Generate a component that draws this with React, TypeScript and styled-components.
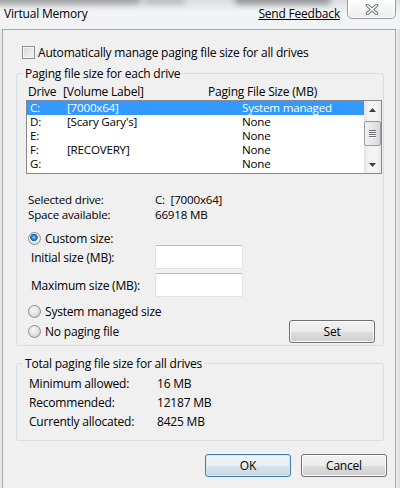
import React from 'react';
import styled, { createGlobalStyle } from 'styled-components';

const DRIVES = [
  { drive: 'C:', label: '[7000x64]', size: 'System managed' },
  { drive: 'D:', label: "[Scary Gary's]", size: 'None' },
  { drive: 'E:', label: '', size: 'None' },
  { drive: 'F:', label: '[RECOVERY]', size: 'None' },
  { drive: 'G:', label: '', size: 'None' },
];

const TOTALS = [
  { label: 'Minimum allowed:', value: '16 MB' },
  { label: 'Recommended:', value: '12187 MB' },
  { label: 'Currently allocated:', value: '8425 MB' },
];

const GlobalStyle = createGlobalStyle`
  html, body {
    margin: 0;
    padding: 0;
  }
  body {
    width: 400px;
    height: 488px;
    overflow: hidden;
    font-family: "Open Sans", "Noto Sans", sans-serif;
    font-size: 12px;
    letter-spacing: -0.2px;
    color: #000;
    background: #eceeef;
  }
`;

const Window = styled.div`
  width: 400px;
  height: 488px;
  display: flex;
  flex-direction: column;
  overflow: hidden;
  background: linear-gradient(90deg, #e2e4e6 0, #eef0f1 3px, #eef0f1 396px, #d9dbdd 400px);
`;

const TitleBar = styled.div`
  position: relative;
  height: 29px;
  flex-shrink: 0;
  display: flex;
  align-items: flex-start;
  background: linear-gradient(#dcdedf, #f3f4f5 12px, #f1f2f3);
  overflow: hidden;
`;

const Smudge = styled.div<{ $left: number; $width: number; $shade: string }>`
  position: absolute;
  top: -5px;
  left: ${({ $left }) => $left}px;
  width: ${({ $width }) => $width}px;
  height: 9px;
  background: ${({ $shade }) => $shade};
  filter: blur(3px);
`;

const Title = styled.div`
  position: relative;
  margin: 6px 0 0 4px;
  line-height: 16px;
`;

const FeedbackLink = styled.a`
  position: relative;
  margin: 6px 7px 0 auto;
  line-height: 16px;
  color: #000;
  text-decoration: underline;
  cursor: pointer;
`;

const CloseButton = styled.button`
  position: relative;
  width: 49px;
  height: 20px;
  margin: -1px 4px 0 0;
  padding: 0;
  border: 1px solid #9a9c9e;
  border-radius: 0 0 5px 5px;
  background: linear-gradient(#fdfdfd, #eceef0);
  display: flex;
  align-items: center;
  justify-content: center;
  box-shadow: inset 0 0 0 1px rgba(255, 255, 255, 0.8);
`;

const Client = styled.div`
  flex: 1;
  margin: 0 4px 0 2px;
  border: 1px solid #a5a7a9;
  border-bottom: none;
  background: #f0f0f0;
  display: flex;
  flex-direction: column;
`;

const CheckRow = styled.label`
  display: flex;
  align-items: center;
  height: 15px;
  margin: 15px 0 0 19px;
  gap: 3px;
`;

const CheckBox = styled.span`
  width: 11px;
  height: 11px;
  border: 1px solid #8e8f8f;
  background: linear-gradient(135deg, #d6d7d9, #f6f6f6);
  box-shadow: inset 0 0 0 1px #f4f4f4;
`;

const Group = styled.fieldset<{ $top: number }>`
  margin: ${({ $top }) => $top}px 11px 0 13px;
  padding: 0;
  border: 1px solid #d5dfe5;
  border-radius: 3px;
  min-width: 0;
`;

const Legend = styled.legend`
  margin-left: 6px;
  padding: 0 2px;
  line-height: 15px;
`;

const GroupBody = styled.div<{ $bottom: number }>`
  display: flex;
  flex-direction: column;
  padding-bottom: ${({ $bottom }) => $bottom}px;
`;

const HeaderRow = styled.div`
  display: flex;
  height: 15px;
  line-height: 15px;
  margin: 3px 0 0 11px;
`;

const HeaderCell = styled.span<{ $width?: number }>`
  width: ${({ $width }) => ($width ? `${$width}px` : 'auto')};
  white-space: nowrap;
`;

const ListBox = styled.div`
  display: flex;
  height: 72px;
  margin: 1px 0 0 9px;
  width: 354px;
  border: 1px solid #828790;
  background: #fff;
`;

const ListRows = styled.div`
  flex: 1;
  display: flex;
  flex-direction: column;
`;

const ListRow = styled.div<{ $selected?: boolean }>`
  display: flex;
  height: 14px;
  line-height: 14px;
  font-size: 11.6px;
  padding-left: 3px;
  white-space: nowrap;
  overflow: hidden;
  background: ${({ $selected }) => ($selected ? '#3399ff' : 'transparent')};
  color: ${({ $selected }) => ($selected ? '#fff' : '#000')};
`;

const Cell = styled.span<{ $width?: number }>`
  width: ${({ $width }) => ($width ? `${$width}px` : 'auto')};
`;

const ScrollBar = styled.div`
  width: 17px;
  display: flex;
  flex-direction: column;
  background: linear-gradient(90deg, #e3e3e3, #f4f4f4 30%, #f4f4f4 70%, #e8e8e8);
`;

const ScrollArrow = styled.div`
  height: 17px;
  display: flex;
  align-items: center;
  justify-content: center;
`;

const ScrollTrack = styled.div`
  flex: 1;
  display: flex;
  flex-direction: column;
  padding-top: 3px;
`;

const Thumb = styled.div`
  height: 23px;
  border: 1px solid #979a9e;
  border-radius: 2px;
  background: linear-gradient(90deg, #f2f2f2, #e6e6e6 50%, #d6d6d6);
  display: flex;
  flex-direction: column;
  align-items: center;
  justify-content: center;
  gap: 1px;
`;

const Grip = styled.span`
  width: 7px;
  height: 1px;
  background: #6a6d71;
  box-shadow: 0 1px 0 #fafafa;
`;

const InfoGrid = styled.div<{ $top: number; $left: number; $labelWidth: number; $rowHeight: number }>`
  display: grid;
  grid-template-columns: ${({ $labelWidth }) => $labelWidth}px auto;
  grid-auto-rows: ${({ $rowHeight }) => $rowHeight}px;
  line-height: ${({ $rowHeight }) => $rowHeight}px;
  font-size: ${({ $rowHeight }) => ($rowHeight < 16 ? '11.6px' : '12px')};
  margin: ${({ $top }) => $top}px 0 0 ${({ $left }) => $left}px;
  white-space: nowrap;
`;

const RadioRow = styled.label<{ $top: number }>`
  display: flex;
  align-items: center;
  gap: 4px;
  height: 14px;
  margin: ${({ $top }) => $top}px 0 0 11px;
`;

const Radio = styled.span<{ $checked?: boolean }>`
  width: 11px;
  height: 11px;
  border-radius: 50%;
  border: 1px solid #8e8f8f;
  background: ${({ $checked }) =>
    $checked
      ? 'radial-gradient(circle at 45% 40%, #bfe6ff 0, #3a9be0 1.5px, #1f5f9a 3.5px, #f4f4f4 4px, #e0e0e0 6px)'
      : 'radial-gradient(circle at 40% 35%, #fafafa 0, #e2e2e2 5px, #cfcfcf 7px)'};
`;

const SizeRow = styled.div<{ $top: number }>`
  display: flex;
  align-items: center;
  height: 24px;
  margin: ${({ $top }) => $top}px 0 0 14px;
`;

const SizeLabel = styled.span`
  width: 124px;
`;

const TextBox = styled.input`
  width: 86px;
  height: 22px;
  padding: 0;
  border: 1px solid #dfe3e8;
  border-top-color: #b9bdc3;
  border-radius: 2px;
  background: #fff;
  box-sizing: content-box;
`;

const BottomRow = styled.div`
  display: flex;
  align-items: center;
  justify-content: space-between;
  margin: 2px 8px 0 11px;
  height: 23px;
`;

const RadioLabel = styled.span`
  display: flex;
  align-items: center;
  gap: 4px;
`;

const PushButton = styled.button<{ $default?: boolean }>`
  width: 86px;
  height: 23px;
  padding: 0;
  font: inherit;
  letter-spacing: inherit;
  color: #000;
  border: 1px solid ${({ $default }) => ($default ? '#3c7fb1' : '#707070')};
  border-radius: 3px;
  background: ${({ $default }) =>
    $default
      ? 'linear-gradient(#f2f5f8 0, #e8eef3 50%, #d7e2ea 51%, #ccd8e2 100%)'
      : 'linear-gradient(#f2f2f2 0, #ebebeb 50%, #dddddd 51%, #cfcfcf 100%)'};
  box-shadow: inset 0 0 0 1px ${({ $default }) => ($default ? '#d4e8f6' : '#fcfcfc')};
`;

const ButtonRow = styled.div`
  display: flex;
  justify-content: flex-end;
  gap: 10px;
  margin: 13px 8px 0 0;
`;

const CloseGlyph = () => (
  <svg width="14" height="11" viewBox="0 0 14 11">
    <path d="M2.5 1.5 L11.5 9.5 M11.5 1.5 L2.5 9.5" stroke="#6d7176" strokeWidth="3.4" strokeLinecap="round" />
    <path d="M2.5 1.5 L11.5 9.5 M11.5 1.5 L2.5 9.5" stroke="#fff" strokeWidth="1.6" strokeLinecap="round" />
  </svg>
);

const ArrowGlyph = ({ up }: { up?: boolean }) => (
  <svg width="7" height="4" viewBox="0 0 7 4">
    <path d={up ? 'M0 4 L3.5 0 L7 4 Z' : 'M0 0 L7 0 L3.5 4 Z'} fill="#3f3f3f" />
  </svg>
);

export default function App() {
  return (
    <>
      <GlobalStyle />
      <Window>
        <TitleBar>
          <Smudge $left={-10} $width={150} $shade="#9a9c9e" />
          <Smudge $left={145} $width={40} $shade="#b8babc" />
          <Smudge $left={235} $width={95} $shade="#8e9092" />
          <Title>Virtual Memory</Title>
          <FeedbackLink>Send Feedback</FeedbackLink>
          <CloseButton aria-label="Close">
            <CloseGlyph />
          </CloseButton>
        </TitleBar>

        <Client>
          <CheckRow>
            <CheckBox />
            Automatically manage paging file size for all drives
          </CheckRow>

          <Group $top={6}>
            <Legend>Paging file size for each drive</Legend>
            <GroupBody $bottom={2}>
              <HeaderRow>
                <HeaderCell $width={35}>Drive</HeaderCell>
                <HeaderCell $width={145}>[Volume Label]</HeaderCell>
                <HeaderCell>Paging File Size (MB)</HeaderCell>
              </HeaderRow>

              <ListBox>
                <ListRows>
                  {DRIVES.map((d, i) => (
                    <ListRow key={d.drive} $selected={i === 0}>
                      <Cell $width={37}>{d.drive}</Cell>
                      <Cell $width={175}>{d.label}</Cell>
                      <Cell>{d.size}</Cell>
                    </ListRow>
                  ))}
                </ListRows>
                <ScrollBar>
                  <ScrollArrow>
                    <ArrowGlyph up />
                  </ScrollArrow>
                  <ScrollTrack>
                    <Thumb>
                      <Grip />
                      <Grip />
                      <Grip />
                      <Grip />
                    </Thumb>
                  </ScrollTrack>
                  <ScrollArrow>
                    <ArrowGlyph />
                  </ScrollArrow>
                </ScrollBar>
              </ListBox>

              <InfoGrid $top={18} $left={11} $labelWidth={127} $rowHeight={15}>
                <span>Selected drive:</span>
                <span>C:&nbsp; [7000x64]</span>
                <span>Space available:</span>
                <span>66918 MB</span>
              </InfoGrid>

              <RadioRow $top={9}>
                <Radio $checked />
                Custom size:
              </RadioRow>
              <SizeRow $top={0}>
                <SizeLabel>Initial size (MB):</SizeLabel>
                <TextBox />
              </SizeRow>
              <SizeRow $top={4}>
                <SizeLabel>Maximum size (MB):</SizeLabel>
                <TextBox />
              </SizeRow>

              <RadioRow $top={7}>
                <Radio />
                System managed size
              </RadioRow>
              <BottomRow>
                <RadioLabel>
                  <Radio />
                  No paging file
                </RadioLabel>
                <PushButton>Set</PushButton>
              </BottomRow>
            </GroupBody>
          </Group>

          <Group $top={10}>
            <Legend>Total paging file size for all drives</Legend>
            <GroupBody $bottom={9}>
              <InfoGrid $top={3} $left={12} $labelWidth={128} $rowHeight={19}>
                {TOTALS.map((t) => (
                  <React.Fragment key={t.label}>
                    <span>{t.label}</span>
                    <span>{t.value}</span>
                  </React.Fragment>
                ))}
              </InfoGrid>
            </GroupBody>
          </Group>

          <ButtonRow>
            <PushButton $default>OK</PushButton>
            <PushButton>Cancel</PushButton>
          </ButtonRow>
        </Client>
      </Window>
    </>
  );
}
